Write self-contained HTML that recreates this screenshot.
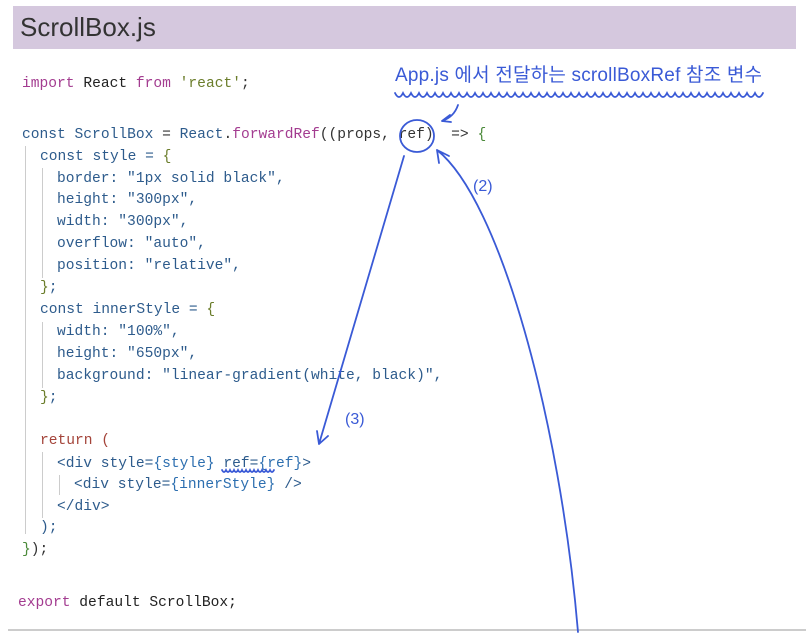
<!DOCTYPE html>
<html><head><meta charset="utf-8"><style>
body{margin:0;width:806px;height:636px;background:#fff;position:relative;overflow:hidden;font-family:"Liberation Sans","Noto Sans CJK KR",sans-serif}
.hdr{position:absolute;left:13px;top:6px;width:783px;height:43px;background:#d5c8de}
.hdr span{position:absolute;left:7px;top:6px;font-size:26px;color:#333}
.l{position:absolute;font-family:"Liberation Mono",monospace;font-size:14.6px;white-space:pre;color:#333;line-height:18px}
.k{color:#a33c90}.c{color:#2d5b8c}.s{color:#6b7d2b}.r{color:#a4443a}.b{color:#2d6fb0}.g{color:#4b8a3a}.d{color:#222}
.bar{position:absolute;width:1px;background:#ccc}
</style></head><body>
<div class="hdr"><span>ScrollBox.js</span></div>
<div class="bar" style="left:25px;top:146px;height:388px"></div>
<div class="bar" style="left:42px;top:168px;height:110px"></div>
<div class="bar" style="left:42px;top:322px;height:66px"></div>
<div class="bar" style="left:42px;top:452px;height:66px"></div>
<div class="bar" style="left:59px;top:475px;height:20px"></div>
<div class="l" style="left:22px;top:75px"><span class="k">import</span> <span class="d">React</span> <span class="k">from</span> <span class="s">'react'</span>;</div>
<div class="l" style="left:22px;top:126px"><span class="c">const ScrollBox</span> = <span class="c">React</span>.<span class="k">forwardRef</span>((props, ref)  =&gt; <span class="g">{</span></div>
<div class="l c" style="left:40px;top:148px">const style = <span class="s">{</span></div>
<div class="l c" style="left:57px;top:170px">border: "1px solid black",</div>
<div class="l c" style="left:57px;top:191px">height: "300px",</div>
<div class="l c" style="left:57px;top:213px">width: "300px",</div>
<div class="l c" style="left:57px;top:235px">overflow: "auto",</div>
<div class="l c" style="left:57px;top:257px">position: "relative",</div>
<div class="l c" style="left:40px;top:279px"><span class="s">}</span>;</div>
<div class="l c" style="left:40px;top:301px">const innerStyle = <span class="s">{</span></div>
<div class="l c" style="left:57px;top:323px">width: "100%",</div>
<div class="l c" style="left:57px;top:345px">height: "650px",</div>
<div class="l c" style="left:57px;top:367px">background: "linear-gradient(white, black)",</div>
<div class="l c" style="left:40px;top:389px"><span class="s">}</span>;</div>
<div class="l r" style="left:40px;top:432px">return (</div>
<div class="l c" style="left:57px;top:455px">&lt;div style=<span class="b">{style}</span> ref=<span class="b">{ref}</span>&gt;</div>
<div class="l c" style="left:74px;top:476px">&lt;div style=<span class="b">{innerStyle}</span> /&gt;</div>
<div class="l c" style="left:57px;top:498px">&lt;/div&gt;</div>
<div class="l c" style="left:40px;top:519px">);</div>
<div class="l" style="left:22px;top:541px"><span class="g">}</span>);</div>
<div class="l d" style="left:18px;top:594px"><span class="k">export</span> default ScrollBox;</div>
<div style="position:absolute;left:8px;top:629px;width:798px;height:2px;background:#ccc"></div>
<svg width="806" height="636" style="position:absolute;left:0;top:0" fill="none" stroke="#3a5ad6" stroke-width="1.8" stroke-linecap="round">
<text x="395" y="81" fill="#3a5ad6" stroke="none" font-size="19" textLength="367" font-family="Liberation Sans,Noto Sans CJK KR,sans-serif">App.js 에서 전달하는 scrollBoxRef 참조 변수</text>
<path d="M395 93 q4 8 8 0 q4 8 8 0 q4 8 8 0 q4 8 8 0 q4 8 8 0 q4 8 8 0 q4 8 8 0 q4 8 8 0 q4 8 8 0 q4 8 8 0 q4 8 8 0 q4 8 8 0 q4 8 8 0 q4 8 8 0 q4 8 8 0 q4 8 8 0 q4 8 8 0 q4 8 8 0 q4 8 8 0 q4 8 8 0 q4 8 8 0 q4 8 8 0 q4 8 8 0 q4 8 8 0 q4 8 8 0 q4 8 8 0 q4 8 8 0 q4 8 8 0 q4 8 8 0 q4 8 8 0 q4 8 8 0 q4 8 8 0 q4 8 8 0 q4 8 8 0 q4 8 8 0 q4 8 8 0 q4 8 8 0 q4 8 8 0 q4 8 8 0 q4 8 8 0 q4 8 8 0 q4 8 8 0 q4 8 8 0 q4 8 8 0 q4 8 8 0 q4 8 8 0"/>
<path d="M458 105 q-4 12 -16 16 M442 121 l8 -6 M442 121 l9 1"/>
<ellipse cx="417" cy="136" rx="17" ry="16"/>
<path d="M404 156 L319 444 M319 444 l-2 -13 M319 444 l9 -8"/>
<text x="345" y="424" fill="#3a5ad6" stroke="none" font-size="16">(3)</text>
<path d="M578 632 C560 420 500 200 437 150 M437 150 l2 13 M437 150 l12 6"/>
<text x="473" y="191" fill="#3a5ad6" stroke="none" font-size="16">(2)</text>
<path d="M222 470 q2 4 4 0 q2 4 4 0 q2 4 4 0 q2 4 4 0 q2 4 4 0 q2 4 4 0 q2 4 4 0 q2 4 4 0 q2 4 4 0 q2 4 4 0 q2 4 4 0 q2 4 4 0 q2 4 4 0"/>
</svg>
</body></html>
